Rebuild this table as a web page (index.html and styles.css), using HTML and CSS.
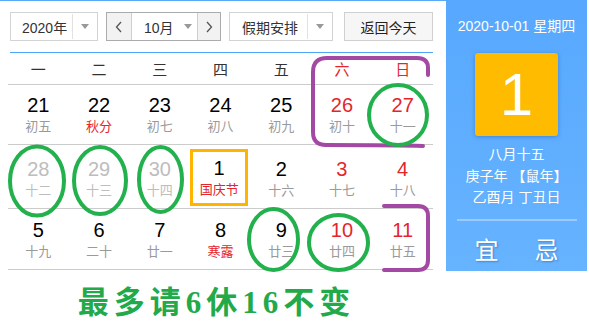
FILE: index.html
```html
<!DOCTYPE html>
<html lang="zh-CN">
<head>
<meta charset="utf-8">
<title>万年历</title>
<link rel="stylesheet" href="styles.css">
</head>
<body>
<div class="page">
  <div class="main">
    <div class="toolbar">
      <div class="sel sel-year">
        <span class="sel-text">2020年</span>
        <span class="sel-arrow"><i class="tri"></i></span>
      </div>
      <div class="month-group">
        <span class="nav-btn"><svg width="8" height="12" viewBox="0 0 8 12"><polyline points="6,1 1.5,6 6,11" fill="none" stroke="#555" stroke-width="1.3"/></svg></span>
        <span class="month-text">10月<i class="tri"></i></span>
        <span class="nav-btn nav-next"><svg width="8" height="12" viewBox="0 0 8 12"><polyline points="2,1 6.5,6 2,11" fill="none" stroke="#555" stroke-width="1.3"/></svg></span>
      </div>
      <div class="sel sel-holiday">
        <span class="sel-text">假期安排</span>
        <span class="sel-arrow"><i class="tri"></i></span>
      </div>
      <div class="today-btn">返回今天</div>
    </div>

    <div class="week week-head">
      <span>一</span><span>二</span><span>三</span><span>四</span><span>五</span><span class="red">六</span><span class="red">日</span>
    </div>

    <div class="week row1">
      <div class="day"><b>21</b><em>初五</em></div>
      <div class="day"><b>22</b><em class="red">秋分</em></div>
      <div class="day"><b>23</b><em>初七</em></div>
      <div class="day"><b>24</b><em>初八</em></div>
      <div class="day"><b>25</b><em>初九</em></div>
      <div class="day"><b class="red">26</b><em>初十</em></div>
      <div class="day"><b class="red">27</b><em>十一</em></div>
    </div>

    <div class="week row2">
      <div class="day other"><b>28</b><em>十二</em></div>
      <div class="day other"><b>29</b><em>十三</em></div>
      <div class="day other"><b>30</b><em>十四</em></div>
      <div class="day today"><b>1</b><em class="red">国庆节</em></div>
      <div class="day"><b>2</b><em>十六</em></div>
      <div class="day"><b class="red">3</b><em>十七</em></div>
      <div class="day"><b class="red">4</b><em>十八</em></div>
    </div>

    <div class="week row3">
      <div class="day"><b>5</b><em>十九</em></div>
      <div class="day"><b>6</b><em>二十</em></div>
      <div class="day"><b>7</b><em>廿一</em></div>
      <div class="day"><b>8</b><em class="red">寒露</em></div>
      <div class="day"><b>9</b><em>廿三</em></div>
      <div class="day"><b class="red">10</b><em>廿四</em></div>
      <div class="day"><b class="red">11</b><em>廿五</em></div>
    </div>

    <div class="slogan">最多请6休16不变</div>
  </div>

  <div class="panel">
    <div class="p-date">2020-10-01 星期四</div>
    <div class="p-big">1</div>
    <div class="p-lunar">
      <div>八月十五</div>
      <div>庚子年 【鼠年】</div>
      <div>乙酉月 丁丑日</div>
    </div>
    <div class="p-sep"></div>
    <div class="p-yiji"><span>宜</span><span>忌</span></div>
  </div>

  <svg class="marks" width="589" height="336" viewBox="0 0 589 336">
    <g fill="none" stroke="#a349a4" stroke-width="4" stroke-linecap="round" stroke-linejoin="round">
      <path d="M423 146 C 400 145, 345 145, 326 145 Q 313 145 313 132 L 313 72 Q 313 58 327 58 L 417 58 Q 428 58 428 68 L 428 75"/>
      <path d="M384 206 L 418 206 Q 428 206 428 216 L 428 260 Q 428 270 418 270 L 384 270"/>
    </g>
    <g fill="none" stroke="#22b14c" stroke-width="4">
      <ellipse cx="398" cy="115" rx="29" ry="30"/>
      <ellipse cx="37" cy="181" rx="27" ry="34.5"/>
      <ellipse cx="100" cy="180.5" rx="26" ry="33.5"/>
      <ellipse cx="160.5" cy="179.5" rx="21.5" ry="32.5"/>
      <ellipse cx="273.5" cy="239.5" rx="24.5" ry="30.5"/>
      <ellipse cx="338.5" cy="242.5" rx="29.5" ry="27.5"/>
    </g>
  </svg>
</div>
</body>
</html>
```

FILE: styles.css
```css
* { box-sizing: border-box; }

body {
  margin: 0;
  background: #fff;
  font-family: "Liberation Sans", "Noto Sans CJK SC", sans-serif;
  color: #333;
}

.page {
  position: relative;
  display: flex;
  width: 589px;
  height: 336px;
}

.main {
  width: 446px;
  border-top: 1px solid #59a9fb;
  padding: 0 13px 0 8px;
}

/* toolbar */
.toolbar {
  display: flex;
  margin: 11px 0 0 2px;
  padding-bottom: 11px;
  border-bottom: 1px solid #4ea4f7;
  font-size: 14px;
}

.sel {
  display: flex;
  height: 29px;
  border: 1px solid #d3d3d3;
  background: #fff;
}

.sel-text {
  display: flex;
  align-items: center;
  white-space: nowrap;
}

.sel-arrow {
  display: flex;
  align-items: center;
  justify-content: center;
  flex: 1;
  border-left: 1px solid #e2e2e2;
  margin: 1px 0;
}

.tri {
  display: inline-block;
  width: 0;
  height: 0;
  border-left: 4px solid transparent;
  border-right: 4px solid transparent;
  border-top: 5px solid #999;
}

.sel-year { width: 88px; }
.sel-year .sel-text { width: 61px; padding-left: 11px; }

.month-group {
  display: flex;
  width: 115px;
  height: 29px;
  margin-left: 8px;
  border: 1px solid #ababab;
}

.nav-btn {
  display: flex;
  align-items: center;
  justify-content: center;
  width: 24px;
  background: #f2f2f2;
}

.nav-next { border-left: 1px solid #cfcfcf; flex: 1; }

.month-text {
  display: flex;
  align-items: center;
  width: 66px;
  padding-left: 12px;
  border-left: 1px solid #cfcfcf;
  background: #fff;
}

.month-text .tri { margin-left: 10px; }

.sel-holiday { width: 104px; margin-left: 8px; }
.sel-holiday .sel-text { width: 77px; padding-left: 12px; }

.today-btn {
  display: flex;
  align-items: center;
  justify-content: center;
  width: 89px;
  height: 29px;
  margin-left: 11px;
  border: 1px solid #d0d0d0;
  background: #f6f6f6;
  color: #222;
}

/* calendar grid */
.week {
  display: grid;
  grid-template-columns: repeat(7, 1fr);
  border-bottom: 1px solid #cccccc;
}

.week-head {
  height: 32px;
  align-items: center;
  justify-items: center;
  font-size: 15px;
  color: #333;
}

.row1 { height: 60px; }
.row2 { height: 64px; }
.row3 { height: 61px; }

.day {
  display: flex;
  flex-direction: column;
  align-items: center;
  justify-content: center;
}

.row2 .day { padding-top: 4px; }

.day b {
  font-weight: normal;
  font-size: 20px;
  line-height: 22px;
  color: #000;
}

.day em {
  font-style: normal;
  font-size: 13px;
  line-height: 16px;
  margin-top: 3px;
  color: #9a9a9a;
}

.day.other b, .day.other em { color: #bdbdbd; }

.red, .day b.red, .day em.red { color: #e4262c; }

.row2 .day.today {
  width: 58px;
  height: 57px;
  margin-top: 4px;
  padding-top: 0;
  border: 3px solid #ffb400;
}

.slogan {
  margin-top: 15px;
  padding-right: 8px;
  text-align: center;
  font-family: "Liberation Serif", "Noto Sans CJK SC", serif;
  font-weight: bold;
  font-size: 31px;
  line-height: 35px;
  letter-spacing: 5px;
  color: #22aa4a;
}

/* right panel */
.panel {
  width: 141px;
  height: 271px;
  padding-top: 16px;
  background: linear-gradient(#57a8fe, #66b3ff);
  color: #fff;
  text-align: center;
}

.p-date {
  font-size: 14px;
  line-height: 20px;
}

.p-big {
  width: 83px;
  height: 83px;
  margin: 17px auto 0;
  border-radius: 3px;
  background: #ffbb00;
  box-shadow: 0 1px 4px rgba(0, 60, 140, 0.35);
  font-size: 60px;
  line-height: 83px;
  color: #fff;
}

.p-lunar {
  margin-top: 8px;
  font-size: 14px;
  line-height: 21.5px;
}

.p-sep {
  height: 2px;
  margin: 10px 10px 0 11px;
  background: rgba(255, 255, 255, 0.35);
}

.p-yiji {
  display: flex;
  justify-content: center;
  gap: 36px;
  margin-top: 15px;
  font-size: 24px;
  line-height: 30px;
  text-shadow: 1px 1px 2px rgba(0, 40, 100, 0.35);
}

.marks {
  position: absolute;
  left: 0;
  top: 0;
  pointer-events: none;
}
```
